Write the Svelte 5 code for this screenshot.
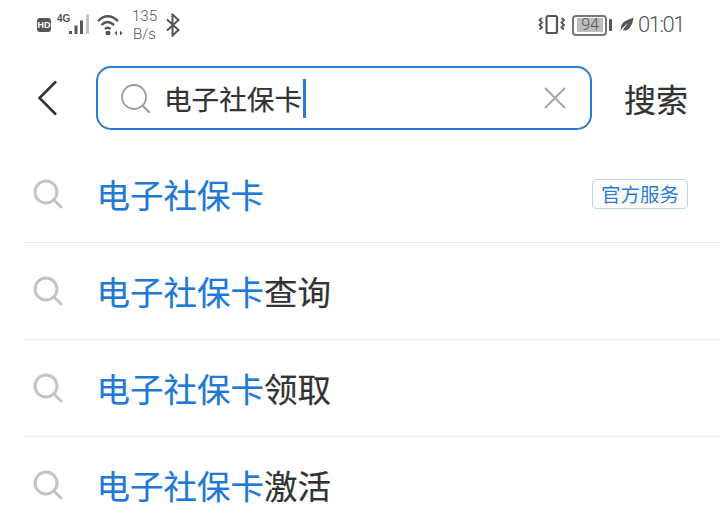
<script>
  const rows = [
    { rest: '', official: true },
    { rest: '查询' },
    { rest: '领取' },
    { rest: '激活' }
  ];
</script>

<div class="page">
  <div class="status">
    <div class="left">
      <span class="hd">HD</span>
      <svg class="signal" width="34" height="22" viewBox="0 0 34 22">
        <text x="0" y="7.5" class="tiny">4G</text>
        <rect x="12" y="17" width="3" height="3" fill="#555"/>
        <rect x="17.5" y="11.5" width="3" height="8.5" fill="#555"/>
        <rect x="23" y="6.5" width="3" height="13.5" fill="#555"/>
        <rect x="29" y="0.5" width="3" height="19.5" fill="#c4c4c4"/>
      </svg>
      <svg class="wifi" width="27" height="22" viewBox="0 0 27 22" fill="none" stroke="#555" stroke-width="2.4">
        <path d="M1 7 Q10.5 -2.5 21 7"/>
        <path d="M4.5 11 Q10.5 5 17 11"/>
        <path d="M8 15 Q10.5 12.5 13.5 15"/>
        <ellipse cx="11" cy="19" rx="2.6" ry="2.2" fill="#555" stroke="none"/>
        <path d="M20 16.5 l-2.5 2.5 l2.5 2.5z M23 16.5 l2.5 2.5 l-2.5 2.5z" fill="#555" stroke="none"/>
      </svg>
      <div class="speed"><span>135</span><span>B/s</span></div>
      <svg class="bt" width="16" height="24" viewBox="0 0 16 24" fill="none" stroke="#555" stroke-width="2">
        <path d="M2 6.5 L13.5 17 L7.5 22.5 V1.5 L13.5 7 L2 17.5"/>
      </svg>
    </div>
    <div class="right">
      <svg class="vib" width="28" height="22" viewBox="0 0 28 22" fill="none" stroke="#555">
        <rect x="8.5" y="2" width="10.5" height="17" rx="1.5" stroke-width="2.2"/>
        <path d="M4 4 l-2.5 2 l2.5 2.5 l-2.5 2.5 l2.5 2.5 l-2.5 2" stroke-width="1.8"/>
        <path d="M23.5 4 l2.5 2 l-2.5 2.5 l2.5 2.5 l-2.5 2.5 l2.5 2" stroke-width="1.8"/>
      </svg>
      <div class="battery">
        <div class="shell"><span>94</span></div>
        <i class="cap"></i>
      </div>
      <svg class="leaf" width="15" height="17" viewBox="0 0 15 17">
        <path d="M0.5 16 C1.5 13.5 3 11.5 4.5 10 C6.5 8 8 7 9.5 6 C7.5 8.5 5.5 10 4 13 C9 15 13.5 9 14.5 0.5 C9 3 1.5 4 2 12 Z" fill="#555"/>
      </svg>
      <span class="time">01:01</span>
    </div>
  </div>

  <div class="bar">
    <svg class="back" width="26" height="40" viewBox="0 0 26 40" fill="none" stroke="#333" stroke-width="2.6">
      <path d="M22 3.5 L5.5 20 L22 36.5"/>
    </svg>
    <div class="input">
      <svg class="q" width="30" height="30" viewBox="0 0 30 30" fill="none" stroke="#9a9a9a" stroke-width="1.8">
        <circle cx="13" cy="13" r="12"/>
        <path d="M22.5 22.5 L28 28" stroke-linecap="round" stroke-width="2.2"/>
      </svg>
      <span class="typed">电子社保卡</span><i class="caret"></i>
      <svg class="clear" width="22" height="22" viewBox="0 0 22 22" stroke="#a8a8a8" stroke-width="2">
        <path d="M1 1 L21 21 M21 1 L1 21"/>
      </svg>
    </div>
    <span class="go">搜索</span>
  </div>

  <ul class="list">
    {#each rows as r}
      <li>
        <svg class="q2" width="30" height="30" viewBox="0 0 30 30" fill="none" stroke="#c4c4c4" stroke-width="3">
          <circle cx="13" cy="13" r="11"/>
          <path d="M21.5 21.5 L28 28" stroke-linecap="round"/>
        </svg>
        <span class="term"><em>电子社保卡</em>{r.rest}</span>
        {#if r.official}<span class="tag">官方服务</span>{/if}
      </li>
    {/each}
  </ul>
</div>

<style>
  :global(body) { margin: 0; background: #fff; }
  .page {
    width: 720px; height: 532px; overflow: hidden; background: #fff;
    font-family: "Noto Sans CJK SC", "Liberation Sans", sans-serif;
    color: #333;
  }
  .status {
    height: 50px; display: flex; justify-content: space-between; align-items: center;
    padding: 0 36px 0 37px; box-sizing: border-box; color: #555;
  }
  .left, .right { display: flex; align-items: center; }
  .hd {
    width: 14px; height: 14px; background: #555; color: #fff; border-radius: 3px;
    font: 700 9px/14px "Liberation Sans", sans-serif; text-align: center;
  }
  .signal { margin-left: 6px; }
  .tiny { font: 700 10px "Liberation Sans", sans-serif; fill: #555; }
  .wifi { margin-left: 6px; }
  .speed {
    display: flex; flex-direction: column; align-items: center; margin-left: 8px; width: 25px;
    font: 15px/18px "Roboto", sans-serif; font-weight: 300; color: #555;
  }
  .bt { margin-left: 8px; }
  .vib { margin-right: 6px; }
  .battery { display: flex; align-items: center; margin-right: 7px; }
  .shell {
    height: 17px; border: 2px solid #777; border-radius: 4px; padding: 0 2px 0 3px;
    display: flex; align-items: center; box-sizing: content-box; width: 26px;
  }
  .shell span {
    flex: 1; height: 14px; background: #bdbdbd; color: #555; text-align: center;
    font: 300 16px/14px "Roboto", sans-serif;
  }
  .cap { width: 3px; height: 12px; background: #555; margin-left: 2px; border-radius: 1px; }
  .leaf { margin-right: 4px; }
  .time { font: 300 22px/24px "Roboto", sans-serif; letter-spacing: -1.5px; color: #555; width: 46px; white-space: nowrap; }

  .bar { display: flex; align-items: center; height: 64px; margin-top: 16px; padding-left: 34px; }
  .back { flex: none; }
  .input {
    margin-left: 36px; width: 496px; height: 64px; box-sizing: border-box;
    border: 2px solid #2b7cd3; border-radius: 15px;
    display: flex; align-items: center; padding-left: 23px; padding-right: 24px;
  }
  .q { flex: none; margin-top: 2px; }
  .typed { margin-left: 13px; font-size: 27.6px; line-height: 36px; color: #333; -webkit-text-stroke: 0.2px #333; }
  .caret { width: 3.4px; height: 39px; background: #2b7cd3; margin-left: 1px; }
  .clear { margin-left: auto; }
  .go { margin-left: 32px; font-size: 32px; line-height: 40px; color: #333; -webkit-text-stroke: 0.2px #333; }

  .list { list-style: none; margin: 0; padding: 0 0 0 24px; margin-top: 16px; }
  li {
    height: 97px; box-sizing: border-box; border-bottom: 1px solid #ececec;
    display: flex; align-items: center; position: relative; padding-bottom: 1px;
  }
  .q2 { flex: none; margin-left: 9px; }
  .term { margin-left: 33.5px; font-size: 33.5px; line-height: 44px; color: #333; -webkit-text-stroke: 0.2px #333; }
  em { font-style: normal; color: #2079d4; -webkit-text-stroke: 0.2px #2079d4; }
  .tag {
    margin-left: auto; margin-right: 32px; width: 96px; height: 30px; box-sizing: border-box;
    border: 1px solid #bcd6ec; border-radius: 4px; color: #2b7cd3;
    font-size: 19.5px; line-height: 27px; text-align: center;
  }
</style>
